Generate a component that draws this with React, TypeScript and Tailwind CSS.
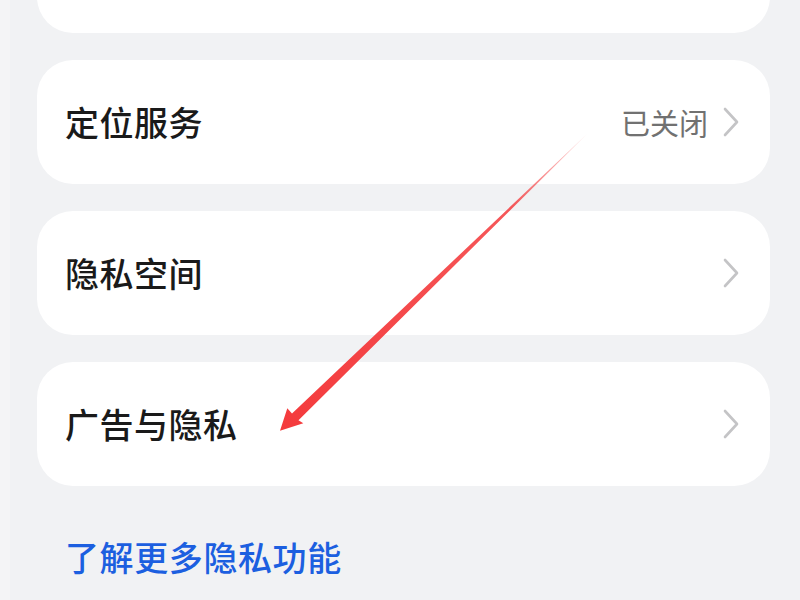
import React from "react";

const Chevron = () => (
  <svg width="18" height="30" viewBox="0 0 18 30" fill="none">
    <path d="M3 2 L15 15 L3 28" stroke="#c4c4c6" strokeWidth="2.6" strokeLinecap="round" strokeLinejoin="round" />
  </svg>
);

const Row = ({ title, value }: { title: string; value?: string }) => (
  <div className="h-[124px] rounded-[36px] bg-white flex items-center pl-[28px] pr-[30px]">
    <span className="flex-1 text-[34px] leading-none text-[#1a1a1a] font-medium tracking-[0.5px]">{title}</span>
    {value && <span className="text-[29px] leading-none text-[#717171] mr-[14px]">{value}</span>}
    <Chevron />
  </div>
);

export default function App() {
  return (
    <div
      className="relative w-[800px] h-[600px] overflow-hidden bg-[#f1f2f4] border-l-[10px] border-[#f4f4f6]"
      style={{ fontFamily: '"Noto Sans CJK SC", "Noto Sans", sans-serif' }}
    >
      <div className="pl-[27px] pr-[30px] flex flex-col gap-[27px]">
        <div className="h-[124px] -mt-[91px] rounded-[36px] bg-white" />
        <Row title="定位服务" value="已关闭" />
        <Row title="隐私空间" />
        <Row title="广告与隐私" />
        <div className="pl-[28px] pt-[27px] text-[34px] leading-none text-[#1c5fe0] font-medium tracking-[0.6px]">
          了解更多隐私功能
        </div>
      </div>
      <svg className="absolute -left-[10px] top-0 pointer-events-none" width="800" height="600" viewBox="0 0 800 600">
        <defs>
          <linearGradient id="ag" x1="588" y1="133" x2="280" y2="430" gradientUnits="userSpaceOnUse">
            <stop offset="0" stopColor="#f43a3c" stopOpacity="0.15" />
            <stop offset="0.25" stopColor="#f43a3c" stopOpacity="0.85" />
            <stop offset="1" stopColor="#f43a3c" stopOpacity="1" />
          </linearGradient>
        </defs>
        <polygon
          points="588.5,132.5 587.5,133.5 292,413.5 287.3,408.3 280,430.7 303.3,423.3 298.5,420.3"
          fill="url(#ag)"
        />
      </svg>
    </div>
  );
}
